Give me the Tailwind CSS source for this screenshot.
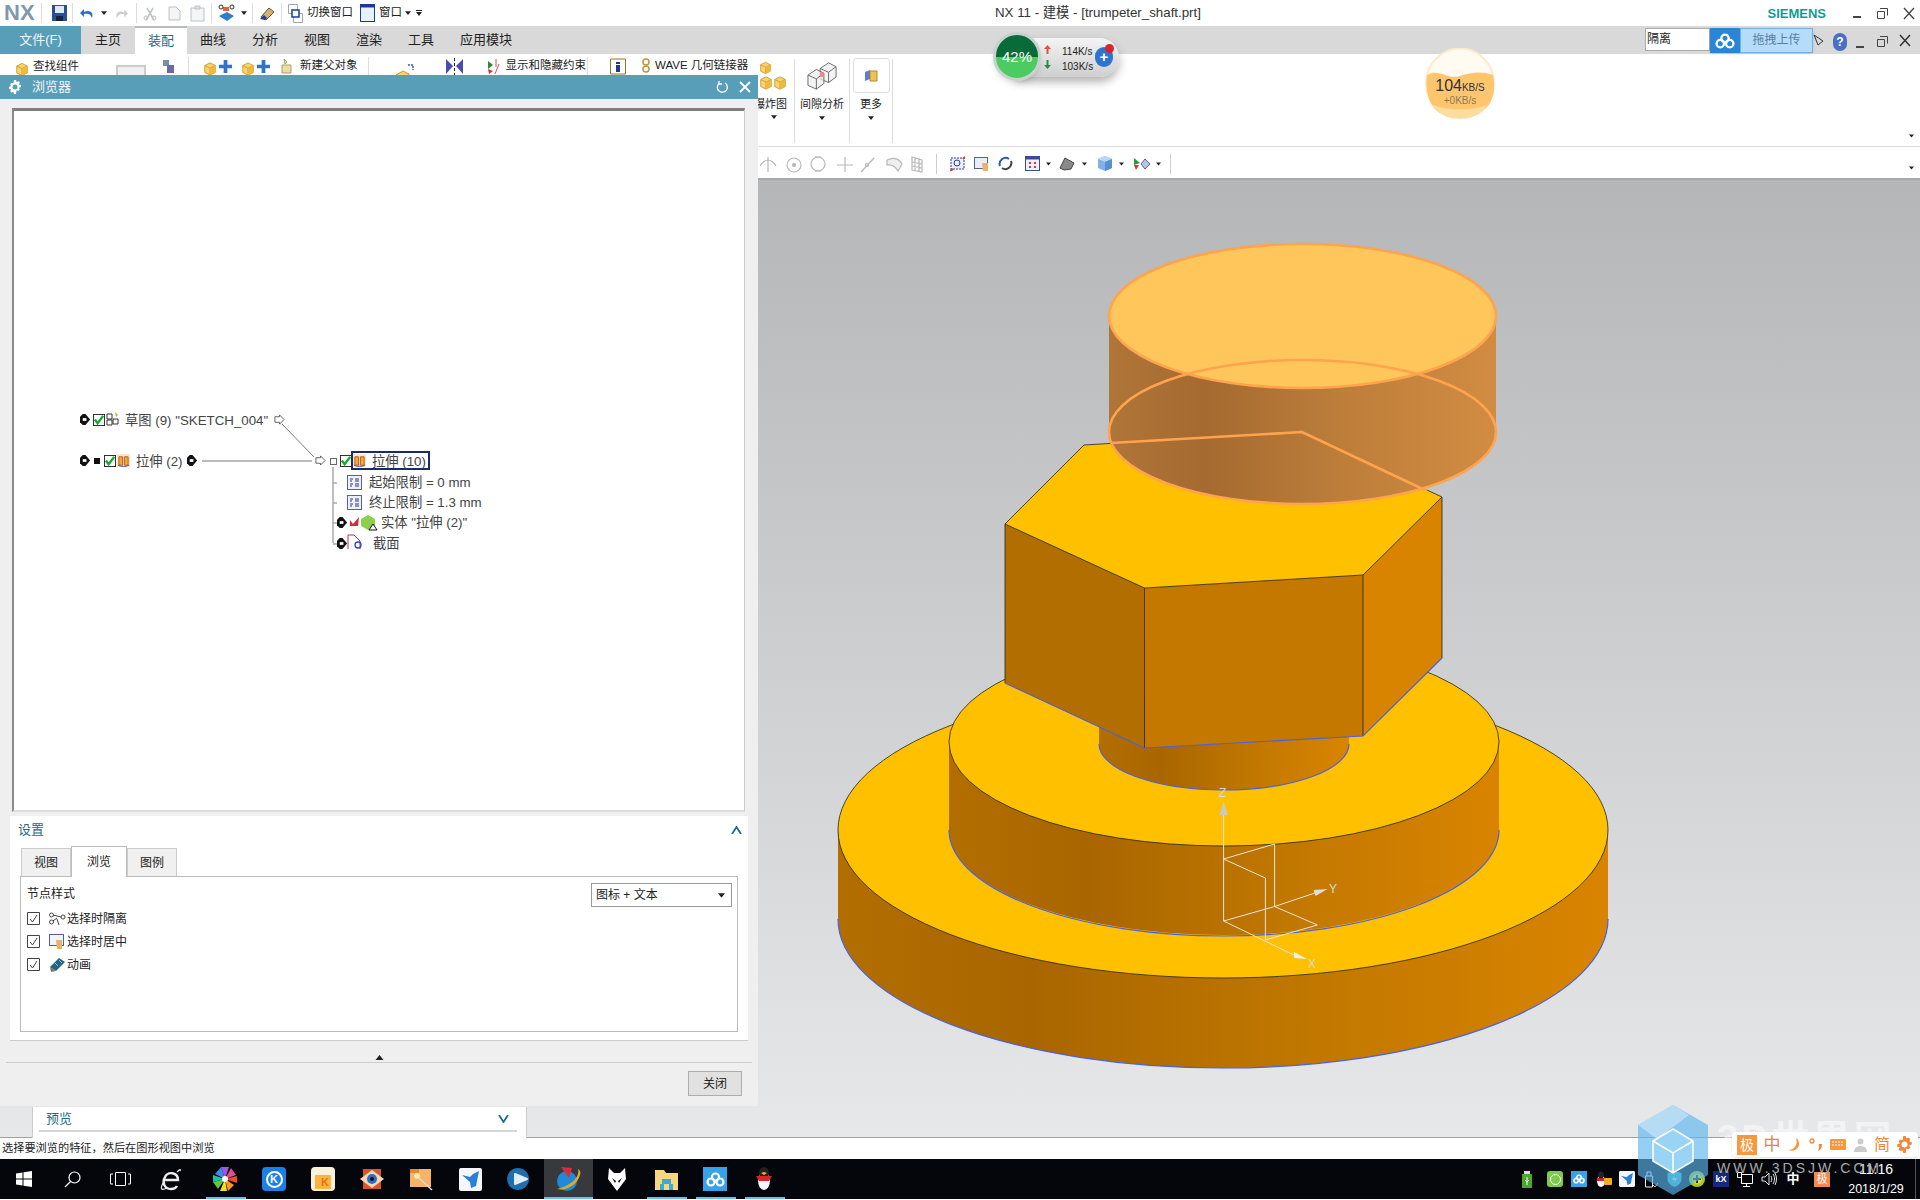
<!DOCTYPE html>
<html lang="zh">
<head>
    <meta charset="UTF-8">
    <title>NX 11 - 建模 - [trumpeter_shaft.prt]</title>
    <script src="https://cdn.jsdelivr.net/npm/@tailwindcss/browser@4"></script>
</head>
<body class="font-['Liberation_Sans','Noto_Sans_CJK_SC',sans-serif] text-[#222]">
<!-- shared icons -->
<svg class="hidden">
    <symbol id="cube" viewBox="0 0 16 16"><path d="M8 1l6 3v8l-6 3-6-3V4z" fill="#fbd468" stroke="#c9963a"/><path d="M2 4l6 3 6-3M8 7v8" fill="none" stroke="#c9963a"/><path d="M8 7l6-3v8l-6 3z" fill="#eeb93f"/></symbol>
    <symbol id="caret" viewBox="0 0 8 5"><path d="M0 0h8L4 5z" fill="#222"/></symbol>
    <symbol id="plus" viewBox="0 0 14 14"><path d="M5 0h4v5h5v4H9v5H5V9H0V5h5z" fill="#2f72d0"/></symbol>
    <symbol id="diamond" viewBox="0 0 12 12"><path d="M3 0h3l5 6-5 6H3L0 9V3z" fill="#111"/><path d="M3 4.500h4v3H3z" fill="#fff"/></symbol>
    <symbol id="check" viewBox="0 0 13 13"><rect x=".5" y=".5" width="12" height="12" fill="#fff" stroke="#222"/><path d="M2 6l3 4 6-8" fill="none" stroke="#19a832" stroke-width="2.6"/></symbol>
    <symbol id="arrow" viewBox="0 0 12 12"><path d="M1 3h5V1l5 5-5 5V9H1z" fill="#fff" stroke="#555"/></symbol>
    <symbol id="extrude" viewBox="0 0 14 14"><rect width="14" height="14" fill="#fbe6cc"/><path d="M2 3h4v9H2zM8 3h4v9H8z" fill="#f3a93c" stroke="#b55b1a"/><path d="M1 12c3 2 9 2 12 0" fill="none" stroke="#3a55b5"/></symbol>
    <symbol id="params" viewBox="0 0 15 15"><rect x=".5" y=".5" width="14" height="14" fill="#eef0fa" stroke="#5560a8"/><path d="M3 4h3M3 6h2M8 4h4M8 6h4M3 9h3M3 11h2M8 9h4M8 11h4" stroke="#2b3480"/></symbol>
</svg>

<div class="relative w-[1920px] h-[1200px] overflow-hidden bg-white">

    <!-- Title bar -->
    <header class="h-[26px] flex items-center bg-white whitespace-nowrap [&>*]:shrink-0">
        <span class="w-[41px] pl-[4px] text-[22px] leading-none font-bold text-[#7f98ab]">NX</span>
        <div class="w-px h-[20px] bg-[#ddd]"></div>
        <svg class="ml-[10px] w-[15px] h-[16px]" viewBox="0 0 15 16"><path d="M0 0h15v16H0z" fill="#2c4f8f"/><path d="M3 1h9v7H3z" fill="#dfe8f5"/><path d="M4 11h7v5H4z" fill="#10233f"/></svg>
        <div class="ml-[5px] w-px h-[20px] bg-[#ddd]"></div>
        <svg class="ml-[7px] w-[14px] h-[14px]" viewBox="0 0 14 14"><path d="M12 12c2-5-2-9-8-6V3L0 7l4 4V8c4-1 7 0 8 4z" fill="#2a6fc4"/></svg>
        <svg class="ml-[7px] w-[6px] h-[4px]"><use href="#caret"/></svg>
        <svg class="ml-[8px] w-[13px] h-[13px]" viewBox="0 0 14 14"><path d="M2 12C0 7 4 3 10 6V3l4 4-4 4V8c-4-1-7 0-8 4z" fill="#c9ced3"/></svg>
        <div class="ml-[8px] w-px h-[20px] bg-[#ddd]"></div>
        <svg class="ml-[6px] w-[14px] h-[15px]" viewBox="0 0 14 15"><path d="M3 14l7-12M11 14L4 2" stroke="#bcc1c6" stroke-width="1.5"/><circle cx="3" cy="12" r="2" fill="none" stroke="#bcc1c6"/><circle cx="11" cy="12" r="2" fill="none" stroke="#bcc1c6"/></svg>
        <svg class="ml-[11px] w-[13px] h-[15px]" viewBox="0 0 13 15"><path d="M1 1h7l4 4v9H1z" fill="#f4f5f6" stroke="#bcc1c6"/></svg>
        <svg class="ml-[9px] w-[15px] h-[17px]" viewBox="0 0 15 17"><path d="M1 3h13v13H1z" fill="#f4f5f6" stroke="#bcc1c6"/><path d="M5 1h5v3H5z" fill="#dde0e3" stroke="#bcc1c6"/></svg>
        <div class="ml-[6px] w-px h-[20px] bg-[#ddd]"></div>
        <svg class="ml-[6px] w-[17px] h-[19px]" viewBox="0 0 17 19"><path d="M1 12l8-4 7 4-7 5z" fill="#2a7fc8"/><path d="M5 3h6v4H5z" fill="#e8622c"/><circle cx="3" cy="3" r="2" fill="#fff" stroke="#333"/><circle cx="14" cy="3" r="2" fill="#fff" stroke="#333"/></svg>
        <svg class="ml-[6px] w-[6px] h-[4px]"><use href="#caret"/></svg>
        <div class="ml-[5px] w-px h-[20px] bg-[#ddd]"></div>
        <svg class="ml-[6px] w-[17px] h-[15px]" viewBox="0 0 17 15"><path d="M2 11l8-9 5 4-8 8z" fill="#d9b26a" stroke="#555"/><path d="M1 13l4-4 3 3-2 2z" fill="#2b3c8f"/></svg>
        <div class="ml-[5px] w-px h-[20px] bg-[#ddd]"></div>
        <svg class="ml-[6px] w-[15px] h-[19px]" viewBox="0 0 15 19"><path d="M.5.5h9v9h-9zM5.5 9.5h9v9h-9z" fill="#fff" stroke="#9aa"/><path d="M4 6h7v7H4z" fill="#fff" stroke="#1a3a9a" stroke-width="1.5"/></svg>
        <span class="ml-[4px] text-[11.5px] leading-none">切换窗口</span>
        <svg class="ml-[7px] w-[15px] h-[18px]" viewBox="0 0 15 18"><rect x=".5" y=".5" width="14" height="17" fill="#e9f1fb" stroke="#1a3a9a"/><path d="M.5.5h14v3H.5z" fill="#1a3a9a"/></svg>
        <span class="ml-[4px] text-[11.5px] leading-none">窗口</span>
        <svg class="ml-[3px] w-[6px] h-[4px]"><use href="#caret"/></svg>
        <svg class="ml-[5px] w-[6px] h-[6px]" viewBox="0 0 6 6"><path d="M0 0h6v1H0zM0 2h6L3 6z" fill="#222"/></svg>
        <span class="ml-[573px] text-[13.3px] leading-none text-[#333]">NX 11 - 建模 - [trumpeter_shaft.prt]</span>
        <span class="ml-auto mr-[27px] text-[13px] leading-none font-bold text-[#0f9d94]">SIEMENS</span>
        <span class="mr-[16px] mt-[8px] w-[8px] h-[2px] bg-[#444]"></span>
        <svg class="mr-[15px] w-[11px] h-[11px]" viewBox="0 0 11 11"><path d="M3 .5h7.500v7M.5 3.500h7v7h-7z" fill="none" stroke="#444"/></svg>
        <svg class="mr-[5px] w-[12px] h-[13px]" viewBox="0 0 12 13"><path d="M1 1l10 11M11 1L1 12" stroke="#444" stroke-width="1.3"/></svg>
    </header>

    <!-- Ribbon tabs -->
    <nav class="h-[28px] flex bg-[#d9d9d9] text-[13px] text-[#222]">
        <div class="w-[81px] flex items-center justify-center bg-[#589eb8] text-white/90">文件(F)</div>
        <div class="w-[54px] flex items-center justify-center">主页</div>
        <div class="w-[52px] flex items-center justify-center bg-white border-t-2 border-[#bbb] text-[#1f6b85]">装配</div>
        <div class="w-[52px] flex items-center justify-center">曲线</div>
        <div class="w-[52px] flex items-center justify-center">分析</div>
        <div class="w-[52px] flex items-center justify-center">视图</div>
        <div class="w-[52px] flex items-center justify-center">渲染</div>
        <div class="w-[52px] flex items-center justify-center">工具</div>
        <div class="w-[78px] flex items-center justify-center">应用模块</div>
    </nav>

    <!-- Ribbon -->
    <section class="h-[93px] flex bg-white text-[12px] border-b border-[#ddd]">
        <div class="w-[758px] h-[24px] shrink-0 flex items-center whitespace-nowrap text-[11.5px] [&>*]:shrink-0">
            <svg class="ml-[15px] w-[14px] h-[17px] mt-[6px]"><use href="#cube"/></svg>
            <span class="ml-[4px] mt-[1px]">查找组件</span>
            <div class="ml-[37px] mt-[13px] w-[30px] h-[16px] bg-[#f0f0f0] border-2 border-b-0 border-[#ccc]"></div>
            <svg class="ml-[16px] w-[12px] h-[14px]" viewBox="0 0 12 14"><path d="M1 1h6v6H1z" fill="#78909c"/><path d="M5 6h7v8H5z" fill="#6a6aa8"/></svg>
            <div class="ml-[14px] w-px h-[18px] bg-[#ddd]"></div>
            <svg class="ml-[14px] mt-[5px] w-[14px] h-[14px]"><use href="#cube"/></svg>
            <svg class="ml-[2px] w-[13px] h-[13px]"><use href="#plus"/></svg>
            <svg class="ml-[9px] mt-[5px] w-[14px] h-[14px]"><use href="#cube"/></svg>
            <svg class="ml-[2px] w-[13px] h-[13px]"><use href="#plus"/></svg>
            <svg class="ml-[10px] w-[14px] h-[16px]" viewBox="0 0 14 16"><path d="M4 1l3 3-2 2zM2 7h9v8H2z" fill="#e8e0a0" stroke="#a9a070"/></svg>
            <span class="ml-[6px]">新建父对象</span>
            <div class="ml-[10px] w-px h-[18px] bg-[#ddd]"></div>
            <svg class="ml-[27px] mt-[8px] w-[20px] h-[17px]" viewBox="0 0 20 17"><path d="M0 13l7-4 6 3v5H0z" fill="#fbd468" stroke="#c9963a"/><path d="M12 3h5v5" fill="none" stroke="#2f5fb0" stroke-width="1.5" stroke-dasharray="2 1"/></svg>
            <svg class="ml-[30px] w-[17px] h-[17px]" viewBox="0 0 17 17"><path d="M0 1l7 7-7 8zM17 1l-7 7 7 8z" fill="#4a4ab8"/><path d="M8.500 0v17" stroke="#222" stroke-dasharray="3 2"/></svg>
            <svg class="ml-[24px] w-[14px] h-[17px]" viewBox="0 0 14 17"><path d="M1 3l5 4-5 4z" fill="#2a8a3a"/><path d="M1 11l5 2-4 3z" fill="#d33"/><path d="M9 1v8M12 6l-4 10" stroke="#c55" fill="none"/></svg>
            <span class="ml-[5px]">显示和隐藏约束</span>
            <div class="ml-[1px] w-px h-[18px] bg-[#ddd]"></div>
            <svg class="ml-[22px] w-[16px] h-[18px]" viewBox="0 0 16 18"><path d="M.5 2h15v15H.5z" fill="#fff" stroke="#8a7a30"/><path d="M6 5h4v2H6zM6 8h4v7H6z" fill="#243a88"/></svg>
            <svg class="ml-[13px] w-[14px] h-[16px]" viewBox="0 0 14 16"><circle cx="7" cy="4" r="3" fill="none" stroke="#c0963a" stroke-width="1.5"/><circle cx="7" cy="11" r="3" fill="none" stroke="#c0963a" stroke-width="1.5"/></svg>
            <span class="ml-[2px]">WAVE 几何链接器</span>
        </div>
        <div class="w-[37px] shrink-0 pt-[2px] flex flex-col items-center border-r border-[#ddd] h-[84px] mt-[5px]">
            <svg class="w-[13px] h-[14px] self-start ml-[1px]"><use href="#cube"/></svg>
            <div class="flex self-start ml-[1px] mt-[1px]"><svg class="w-[14px] h-[14px]"><use href="#cube"/></svg><svg class="w-[14px] h-[14px]"><use href="#cube"/></svg></div>
            <span class="whitespace-nowrap mt-[6px] w-[32px] text-[11px] ml-[-12px]">爆炸图</span>
            <svg class="mt-[2px] w-[6px] h-[4px] ml-[-4px]"><use href="#caret"/></svg>
        </div>
        <div class="w-[55px] shrink-0 pt-[2px] flex flex-col items-center border-r border-[#ddd] h-[84px] mt-[5px]">
            <svg class="w-[30px] h-[30px]" viewBox="0 0 32 32"><path d="M14 8l9-6 8 4v11l-8 6-9-4z" fill="#f4f4f4" stroke="#666"/><path d="M14 8l9 4 8-6M23 12v11" fill="none" stroke="#666"/><path d="M1 15l9-6 8 4v11l-8 6-9-4z" fill="#eee" fill-opacity=".7" stroke="#666"/><path d="M1 15l9 4 8-6M10 19v11" fill="none" stroke="#666"/><path d="M14 12h4v5h-4z" fill="#e88"/></svg>
            <span class="whitespace-nowrap mt-[5px] text-[11px]">间隙分析</span>
            <svg class="mt-[3px] w-[6px] h-[4px]"><use href="#caret"/></svg>
        </div>
        <div class="w-[43px] shrink-0 flex flex-col items-center border-r border-[#ddd] h-[84px] mt-[5px]">
            <div class="mt-[-1px] w-[37px] h-[35px] border border-[#ddd] rounded-[3px] flex items-center justify-center">
                <svg class="w-[14px] h-[13px]" viewBox="0 0 14 13"><path d="M1 3l5-2v9l-5 2z" fill="#5a7fd0"/><path d="M6 2h7v10H6z" fill="#f0c050" stroke="#b58a30"/></svg>
            </div>
            <span class="mt-[3px] text-[11px]">更多</span>
            <svg class="mt-[3px] w-[6px] h-[4px]"><use href="#caret"/></svg>
        </div>
        <svg class="ml-auto mr-[6px] mt-[80px] w-[5px] h-[4px]"><use href="#caret"/></svg>
    </section>

    <!-- View toolbar -->
    <section class="h-[33px] pt-[2px] pl-[758px] flex items-center bg-white border-b-2 border-[#a9a9a9]">
        <svg class="ml-[2px] w-[170px] h-[20px]" viewBox="0 0 170 20" fill="none" stroke="#b8b8b8" stroke-width="1.200">
            <path d="M8 3v15M0 12c2-4 6-6 8-6s6 2 8 6"/>
            <circle cx="34" cy="11" r="7"/><circle cx="34" cy="11" r="1.500" fill="#b8b8b8"/>
            <circle cx="58" cy="10" r="7"/><path d="M55 3h6M55 17h6"/>
            <path d="M85 3v15M77 11h16"/>
            <path d="M101 18l13-14"/><circle cx="107" cy="11" r="1.500"/>
            <path d="M127 6c6-3 12-2 15 4l-4 7c-3-5-6-7-11-6z" fill="#eee"/>
            <path d="M152 3l10 3v12l-10-2zM155 4v13M159 5v13M152 8l10 2M152 12l10 2"/>
        </svg>
        <div class="ml-[6px] w-px h-[20px] bg-[#ccc]"></div>
        <svg class="ml-[13px] w-[15px] h-[15px]" viewBox="0 0 15 15"><rect x="1" y="2" width="13" height="11" fill="#eef" stroke="#2b3c8f" stroke-dasharray="2 1"/><circle cx="7" cy="7" r="3" fill="none" stroke="#2b3c8f"/><path d="M0 15l3-2M15 1l-2 2" stroke="#d33" stroke-width="2"/></svg>
        <svg class="ml-[9px] w-[16px] h-[14px]" viewBox="0 0 16 14"><rect x=".5" y=".5" width="13" height="11" fill="#e9edf8" stroke="#56608f"/><path d="M8 6h6v8H9z" fill="#e9b36a"/></svg>
        <svg class="ml-[8px] w-[15px] h-[15px]" viewBox="0 0 15 15" fill="none"><path d="M2 10A6 6 0 0 1 11 3" stroke="#2a5aa8" stroke-width="2"/><path d="M13 5a6 6 0 0 1-9 7" stroke="#444" stroke-width="2"/></svg>
        <svg class="ml-[12px] w-[15px] h-[15px]" viewBox="0 0 15 15"><rect x=".5" y=".5" width="14" height="14" fill="#f0f0fa" stroke="#3a4a9a"/><path d="M.5.5h14v3H.5z" fill="#3a4a9a"/><path d="M4 6h2v2H4zM9 6h2v2H9zM4 10h2v2H4zM9 10h2v2H9z" fill="#d33"/></svg>
        <svg class="ml-[6px] w-[5px] h-[4px]"><use href="#caret"/></svg>
        <svg class="ml-[8px] w-[16px] h-[14px]" viewBox="0 0 16 14"><path d="M1 11l5-10 9 5-3 6-7 1z" fill="#8a8a8a" stroke="#444"/></svg>
        <svg class="ml-[7px] w-[5px] h-[4px]"><use href="#caret"/></svg>
        <svg class="ml-[11px] w-[14px] h-[15px]" viewBox="0 0 14 15"><path d="M7 0l7 3v9l-7 3-7-3V3z" fill="#7fb0e8"/><path d="M0 3l7 3 7-3-7-3z" fill="#b9d6f5"/><path d="M7 6v9l7-3V3z" fill="#5a8fd0"/></svg>
        <svg class="ml-[7px] w-[5px] h-[4px]"><use href="#caret"/></svg>
        <svg class="ml-[10px] w-[16px] h-[14px]" viewBox="0 0 16 14"><path d="M0 1l6 5-6 2z" fill="#2a9a3a"/><path d="M0 8l5 0-3 5z" fill="#d33"/><path d="M7 7l4-5 5 5-5 5z" fill="#b8c4e4" stroke="#56608f"/></svg>
        <svg class="ml-[6px] w-[5px] h-[4px]"><use href="#caret"/></svg>
        <div class="ml-[9px] w-px h-[20px] bg-[#ccc]"></div>
        <svg class="ml-auto mr-[6px] mt-[8px] w-[5px] h-[4px]"><use href="#caret"/></svg>
    </section>

    <!-- Graphics viewport -->
    <main class="h-[957px] bg-linear-to-b from-[#b4b6b8] to-[#e6e8ea]">
        <svg class="w-[1920px] h-[957px]" viewBox="0 181 1920 957" font-family="Liberation Sans">
            <defs>
                <linearGradient id="metal">
                    <stop offset="0" stop-color="#b26e00"/>
                    <stop offset=".25" stop-color="#a96600"/>
                    <stop offset=".6" stop-color="#c07700"/>
                    <stop offset="1" stop-color="#d98400"/>
                </linearGradient>
                <linearGradient id="glass">
                    <stop offset="0" stop-color="#b07538"/>
                    <stop offset=".25" stop-color="#a56a30"/>
                    <stop offset=".6" stop-color="#bd7e3a"/>
                    <stop offset="1" stop-color="#d28c42"/>
                </linearGradient>
            </defs>
            <!-- base disk -->
            <path d="M838 831v89A385 149 0 0 0 1608 920V831z" fill="url(#metal)"/>
            <path d="M838 920A385 149 0 0 0 1608 920" fill="none" stroke="#4a62e0" stroke-width="1.200"/>
            <ellipse cx="1223" cy="831" rx="385" ry="148" fill="#ffc000" stroke="#222" stroke-width=".8"/>
            <!-- middle disk -->
            <path d="M949 743v88A275 105 0 0 0 1499 831V743z" fill="url(#metal)"/>
            <path d="M949 831A275 106 0 0 0 1499 831" fill="none" stroke="#4a62e0" stroke-width="1.200"/>
            <ellipse cx="1224" cy="743" rx="275" ry="104" fill="#ffc000" stroke="#222" stroke-width=".8"/>
            <!-- neck -->
            <path d="M1099 700v45A125 46 0 0 0 1349 745V700z" fill="url(#metal)"/>
            <path d="M1099 745A125 46 0 0 0 1349 745" fill="none" stroke="#4a62e0" stroke-width="1.200"/>
            <!-- hexagon -->
            <path d="M1005 525V684L1144.500 749V589z" fill="#b36e00"/>
            <path d="M1144.500 589V749L1363 737V576z" fill="#c57800"/>
            <path d="M1363 576V737L1442 659V498z" fill="#d98400"/>
            <path d="M1084 446L1005 525L1144.500 589L1363 576L1442 498L1302 433z" fill="#ffc000" stroke="#222" stroke-width=".8"/>
            <path d="M1005 525V684M1144.500 589V749M1363 576V737M1442 498V659" stroke="#222" stroke-width=".8"/>
            <path d="M1005 684L1144.500 749L1363 737L1442 659" fill="none" stroke="#4a62e0" stroke-width="1.200"/>
            <!-- transparent cylinder -->
            <path d="M1109 317V433A193.500 72 0 0 0 1496 433V317z" fill="url(#glass)"/>
            <ellipse cx="1302.500" cy="317" rx="193.500" ry="72" fill="#ffc75b"/>
            <g fill="none" stroke="#ffa34d" stroke-width="2.600">
                <ellipse cx="1302.500" cy="317" rx="193.500" ry="72"/>
                <ellipse cx="1302.500" cy="433" rx="193.500" ry="72"/>
                <path d="M1111 444L1302 433L1427 492"/>
            </g>
            <!-- datum csys -->
            <g fill="none" stroke="#e8e4d8" stroke-width="1">
                <path d="M1223.600 922V815M1223.600 860L1274.600 845V907.500M1223.600 860L1265.400 879V941L1317.400 926L1274.600 907.500L1223.600 922L1298 958M1274.600 907.500L1315 894"/>
            </g>
            <path d="M1223.600 802l-4 14h8z" fill="#c8c8c8"/>
            <path d="M1327.600 890l-14 1 2 6z" fill="#ddd"/>
            <path d="M1307 960l-13-7 0 6z" fill="#eee"/>
            <g fill="#d8d8d8" font-size="12">
                <text x="1219" y="798">Z</text>
                <text x="1329" y="894">Y</text>
                <text x="1308" y="969">X</text>
            </g>
        </svg>
    </main>

    <!-- Status bar -->
    <footer class="h-[22px] pl-[2px] flex items-center bg-white border-t border-[#a0a0a0] text-[11.2px] text-[#222]">选择要浏览的特征，然后在图形视图中浏览</footer>

    <!-- Taskbar -->
    <div class="h-[40px] flex bg-[#04060c] relative">
        <div class="w-[48px] flex items-center justify-center">
            <svg class="w-[16px] h-[16px]" viewBox="0 0 16 16"><path d="M0 2.500l6.500-1V7.500H0zM7.500 1.300L16 0v7.500H7.500zM0 8.500h6.500v6L0 13.500zM7.500 8.500H16V16l-8.500-1.300z" fill="#fff"/></svg>
        </div>
        <div class="w-[48px] flex items-center justify-center">
            <svg class="w-[17px] h-[17px]" viewBox="0 0 17 17" fill="none" stroke="#fff" stroke-width="1.200"><circle cx="10.500" cy="6.500" r="5.500"/><path d="M6.500 10.500L1 16"/></svg>
        </div>
        <div class="w-[48px] flex items-center justify-center">
            <svg class="w-[21px] h-[14px]" viewBox="0 0 21 14" fill="none" stroke="#fff"><path d="M5.500.5h10v13h-10zM3 2H.5v10H3M18 2h2.500v10H18"/></svg>
        </div>
        <div class="w-[52px] flex items-center justify-center">
            <svg class="w-[21px] h-[23px]" viewBox="0 0 21 23" fill="none" stroke="#eee" stroke-width="2.400"><path d="M4 12h14c0-8-10-9-13-3-3 5-1 12 6 12 3 0 5-1 6-3"/><path d="M17 4c3-3 4-3 3-1M3 15c-3 6-2 8 4 5" stroke-width="1.200"/></svg>
        </div>
        <div class="relative ml-[4.5px] w-[49px] flex items-center justify-center">
            <svg class="w-[24px] h-[24px]" viewBox="0 0 24 24"><path d="M12 12L8 0h8z" fill="#a056e0"/><path d="M12 12l6-11 5 7z" fill="#e0508c"/><path d="M12 12l12-3v7z" fill="#f04a30"/><path d="M12 12l9 6-6 6z" fill="#fa9a20"/><path d="M12 12l2 12H7z" fill="#f4e020"/><path d="M12 12L5 22l-5-7z" fill="#5cc83c"/><path d="M12 12L0 15V8z" fill="#1fbfa0"/><path d="M12 12L2 7l6-7z" fill="#3a8ae8"/><circle cx="12" cy="12" r="3" fill="#fff"/></svg>
            <span class="absolute bottom-0 left-[5px] w-[40px] h-[2px] bg-[#76b9ed]"></span>
        </div>
        <div class="w-[49px] flex items-center justify-center">
            <div class="w-[24px] h-[24px] rounded-[4px] bg-[#1b7fe8] flex items-center justify-center"><span class="w-[17px] h-[17px] rounded-full border-2 border-white text-white text-[11px] leading-[13px] font-bold text-center">K</span></div>
        </div>
        <div class="w-[49px] flex items-center justify-center">
            <div class="w-[24px] h-[24px] rounded-[4px] bg-[#fbf0dc] flex items-end justify-center"><span class="w-[16px] h-[14px] mb-[2px] bg-[#f9b53e] text-[#e8701a] text-[11px] leading-[14px] font-bold text-right pr-[2px]">K</span></div>
        </div>
        <div class="w-[49px] flex items-center justify-center">
            <svg class="w-[24px] h-[24px]" viewBox="0 0 24 24"><rect x="3" y="2" width="18" height="20" fill="#d8542c"/><path d="M0 12l12-9 12 9-12 9z" fill="#f4d8b4"/><circle cx="12" cy="12" r="5" fill="#2a6fc4"/><circle cx="12" cy="12" r="2" fill="#111"/></svg>
        </div>
        <div class="w-[49px] flex items-center justify-center">
            <svg class="w-[24px] h-[24px]" viewBox="0 0 24 24"><rect x="1" y="2" width="21" height="18" fill="#f4b46a"/><path d="M1 2h9v4H1z" fill="#e08a3a"/><path d="M10 11l13 12" stroke="#ddd" stroke-width="1.500"/><circle cx="8" cy="9" r="3" fill="#f8e8a0"/></svg>
        </div>
        <div class="w-[49px] flex items-center justify-center">
            <svg class="w-[23px] h-[23px]" viewBox="0 0 23 23"><rect width="23" height="23" rx="2" fill="#f4f6fb"/><path d="M20 3l-3 15-5 2-1-6-8-7 8 2 3-3z" fill="#2a7fd8"/></svg>
        </div>
        <div class="w-[49px] flex items-center justify-center">
            <svg class="w-[24px] h-[24px]" viewBox="0 0 24 24"><circle cx="11" cy="12" r="11" fill="#1f6fb0"/><path d="M8 7l12 5-12 5z" fill="#dfeefa" stroke="#dfeefa" stroke-width="2" stroke-linejoin="round"/></svg>
        </div>
        <div class="relative w-[49px] flex items-center justify-center bg-[#38393c]">
            <svg class="w-[26px] h-[28px]" viewBox="0 0 26 28"><circle cx="12" cy="16" r="10" fill="#1f8ad8"/><path d="M6 2l11 1-3 10z" fill="#e02a3c"/><path d="M2 24c8 2 20-3 23-14 1-3 0-5-2-6 2 6-4 16-21 20z" fill="#e0a830"/></svg>
            <span class="absolute bottom-0 left-0 w-full h-[2px] bg-[#76b9ed]"></span>
        </div>
        <div class="w-[49px] flex items-center justify-center">
            <svg class="w-[18px] h-[23px]" viewBox="0 0 18 23"><path d="M1 0l5 5h6l5-5 1 11-9 12L0 11z" fill="#fff"/><path d="M4 10l4 3-1 2zM14 10l-4 3 1 2z" fill="#111"/></svg>
        </div>
        <div class="relative w-[49px] flex items-center justify-center">
            <svg class="w-[23px] h-[21px]" viewBox="0 0 23 21"><path d="M0 1h9l2 3h12v17H0z" fill="#f5d77e"/><path d="M7 10h9v5H7zM5 15h4v6H5zM14 15h4v6h-4z" fill="#3fa8d8"/></svg>
            <span class="absolute bottom-0 left-[5px] w-[40px] h-[2px] bg-[#76b9ed]"></span>
        </div>
        <div class="relative w-[49px] flex items-center justify-center">
            <div class="w-[24px] h-[24px] bg-[#36a3e8] flex items-center justify-center"><svg class="w-[19px] h-[15px]" viewBox="0 0 19 15" fill="none" stroke="#fff" stroke-width="2.200"><circle cx="9.500" cy="5" r="3.500"/><circle cx="5" cy="10" r="3.500"/><circle cx="14" cy="10" r="3.500"/></svg></div>
            <span class="absolute bottom-0 left-[5px] w-[40px] h-[2px] bg-[#76b9ed]"></span>
        </div>
        <div class="relative w-[49px] flex items-center justify-center">
            <svg class="w-[18px] h-[24px]" viewBox="0 0 18 24"><ellipse cx="9" cy="14" rx="6" ry="9" fill="#f5f5f5"/><ellipse cx="9" cy="6" rx="5" ry="6" fill="#222"/><path d="M1 9h16l-3 5H4z" fill="#d8242c"/><path d="M6 6l3-1 3 1-3 2z" fill="#f0b020"/></svg>
            <span class="absolute bottom-0 left-[5px] w-[40px] h-[2px] bg-[#76b9ed]"></span>
        </div>

        <!-- Tray -->
        <div class="ml-[722.5px] flex items-center h-[40px] text-white">
            <div class="w-[32px] flex justify-center"><svg class="w-[12px] h-[17px]" viewBox="0 0 12 17"><path d="M1 3h10v14H1z" fill="#4aa82c"/><path d="M3 0h6v3H3z" fill="#ddd"/><path d="M6 6v8M4 9l2 2 2-2" stroke="#fff" fill="none"/></svg></div>
            <div class="w-[24px] flex justify-center"><div class="w-[16px] h-[16px] rounded-[3px] bg-[#7ccb4a] border-2 border-[#7ccb4a] flex items-center justify-center"><span class="w-[11px] h-[11px] rounded-full border border-white"></span></div></div>
            <div class="w-[24px] flex justify-center"><div class="w-[16px] h-[16px] bg-[#36a3e8] flex items-center justify-center"><svg class="w-[12px] h-[10px]" viewBox="0 0 19 15" fill="none" stroke="#fff" stroke-width="2.600"><circle cx="9.500" cy="5" r="3.500"/><circle cx="5" cy="10" r="3.500"/><circle cx="14" cy="10" r="3.500"/></svg></div></div>
            <div class="w-[24px] flex justify-center"><svg class="w-[17px] h-[17px]" viewBox="0 0 17 17"><ellipse cx="6" cy="10" rx="4" ry="6" fill="#f5f5f5"/><path d="M2 7h8v3H2z" fill="#d8242c"/><ellipse cx="6" cy="4" rx="3" ry="3.500" fill="#222"/><rect x="9" y="7" width="8" height="7" rx="1" fill="#f0b020"/></svg></div>
            <div class="w-[24px] flex justify-center"><svg class="w-[16px] h-[16px]" viewBox="0 0 23 23"><rect width="23" height="23" rx="2" fill="#f4f6fb"/><path d="M20 3l-3 15-5 2-1-6-8-7 8 2 3-3z" fill="#2a7fd8"/></svg></div>
            <div class="w-[24px] flex justify-center"><svg class="w-[14px] h-[17px]" viewBox="0 0 14 17" fill="none" stroke="#eee"><path d="M1.500 5h7v11h-7zM3 5V1h4v4"/><path d="M9 14l2 2 3-4" stroke-width=".8"/></svg></div>
            <div class="w-[22px] flex justify-center"><svg class="w-[15px] h-[16px]" viewBox="0 0 15 16"><path d="M7.500 0l7 2v6c0 4-4 7-7 8-3-1-7-4-7-8V2z" fill="#3aa8b8"/><path d="M8 3L5 9h3l-1 4 3-6H7z" fill="#b8f0e0"/></svg></div>
            <div class="w-[24px] flex justify-center"><svg class="w-[16px] h-[16px]" viewBox="0 0 16 16"><circle cx="8" cy="8" r="8" fill="#a8c820"/><circle cx="8" cy="8" r="5" fill="#f0e020"/><path d="M7 4h2v3h3v2H9v3H7V9H4V7h3z" fill="#222"/></svg></div>
            <div class="w-[24px] flex justify-center"><div class="w-[16px] h-[16px] bg-[#16287a] text-[9px] leading-[16px] font-bold text-center">kX</div></div>
            <div class="w-[24px] flex justify-center"><svg class="w-[16px] h-[15px]" viewBox="0 0 16 15" fill="none" stroke="#fff"><path d="M.500.500h4v5h-4zM4.500 2.500h11v9h-11zM9.500 11.500v3M6 14.500h7"/></svg></div>
            <div class="w-[24px] flex justify-center"><svg class="w-[16px] h-[14px]" viewBox="0 0 16 14" fill="none" stroke="#fff"><path d="M1 5h3l4-4v12L4 9H1zM10 4c1 2 1 4 0 6M12 2c2 3 2 7 0 10M14 1c2 4 2 8 0 12" stroke-width=".9"/></svg></div>
            <div class="w-[24px] text-center text-[13px] font-bold">中</div>
            <div class="ml-[9px] w-[16px] h-[15px] bg-[#f08a50] text-[11px] leading-[15px] text-center text-white">极</div>
        </div>
        <div class="absolute right-[14px] top-0 h-[40px] w-[60px] flex flex-col items-center justify-center leading-[20px] text-white whitespace-nowrap">
            <span class="text-[14px]">11:16</span><span class="text-[12.5px]">2018/1/29</span>
        </div>
        <div class="absolute right-[4px] top-0 w-px h-[40px] bg-[#555]"></div>
    </div>

    <!-- Part navigator panel -->
    <aside class="absolute left-0 top-[75px] w-[758px] h-[1031px] flex flex-col bg-[#efefef]">
        <div class="h-[24px] shrink-0 flex items-center bg-[#589eb8] text-white text-[13px]">
            <svg class="ml-[8px] w-[14px] h-[14px]" viewBox="0 0 14 14"><path d="M6 0h2l.5 2 2-.8 1.300 1.400-.9 1.900 2.100.6v2l-2.100.6.900 1.900-1.300 1.400-2-.8L8 14H6l-.5-2.200-2 .8L2.200 11.200l.9-1.900L1 8.700v-2l2.100-.6-.9-1.900L3.500 2.800l2 .8z" fill="#fff"/><circle cx="7" cy="7" r="2.500" fill="#589eb8"/></svg>
            <span class="ml-[10px] text-white/90">浏览器</span>
            <svg class="ml-auto w-[13px] h-[13px]" viewBox="0 0 13 13" fill="none" stroke="#fff" stroke-width="1.300"><path d="M9 2A5 5 0 1 1 3 2.500M3 0v3h3"/></svg>
            <svg class="ml-[10px] mr-[7px] w-[12px] h-[12px]" viewBox="0 0 12 12"><path d="M1 1l10 10M11 1L1 11" stroke="#fff" stroke-width="1.800"/></svg>
        </div>

        <!-- Node canvas (y offsets in here follow the graph, a free canvas) -->
        <div class="relative shrink-0 ml-[12px] mt-[9px] w-[733px] h-[704px] bg-white border-t-[3px] border-l-2 border-r border-b-2 border-t-[#7f7f7f] border-l-[#8a8a8a] border-r-[#ccc] border-b-[#ddd] text-[13.3px] text-[#444]">
            <svg class="absolute left-[-14px] top-[-111px] w-[600px] h-[600px]" viewBox="0 0 600 600">
                <path d="M282 424L314 457M202 461H312" stroke="#777" fill="none"/>
                <path d="M333 467V543M333 483h4M333 503h4M333 523h6M333 544h6" stroke="#aaa" stroke-width="1.500" fill="none"/>
                <rect x="330.500" y="458.500" width="6" height="6" fill="#fff" stroke="#666"/>
                <rect x="94" y="458" width="6" height="6" fill="#111"/>
                <use href="#diamond" x="80" y="414" width="11" height="11"/>
                <use href="#check" x="93" y="414" width="12" height="12"/>
                <path d="M107 414h5v5h-5zM113 419h5v5h-5zM107 420h5v5h-5z" fill="none" stroke="#333"/>
                <path d="M115 412l3 3-2 2z" fill="#e0a030"/>
                <use href="#arrow" x="274" y="414" width="11" height="11"/>
                <use href="#diamond" x="80" y="455" width="11" height="11"/>
                <use href="#check" x="104" y="455" width="12" height="12"/>
                <use href="#extrude" x="117" y="454" width="13" height="13"/>
                <use href="#diamond" x="187" y="455" width="11" height="11"/>
                <use href="#arrow" x="315" y="455" width="11" height="11"/>
                <use href="#check" x="340" y="455" width="12" height="12"/>
                <use href="#extrude" x="353" y="454" width="13" height="13"/>
                <use href="#params" x="347" y="475" width="15" height="15"/>
                <use href="#params" x="347" y="495" width="15" height="15"/>
                <use href="#diamond" x="337" y="517" width="11" height="11"/>
                <path d="M350 520l3 4 6-7-1 9h-8z" fill="#d82a3a"/>
                <path d="M368 515l7 4v7l-7 4-7-4v-7z" fill="#8ad04a"/>
                <path d="M369 530l4-6 4 6z" fill="#fff" stroke="#111"/>
                <use href="#diamond" x="337" y="538" width="11" height="11"/>
                <path d="M348 549V535h6l6 6v8" fill="none" stroke="#c82a4a"/>
                <circle cx="358" cy="545" r="3" fill="none" stroke="#2a4ab8" stroke-width="1.300"/>
            </svg>
            <div class="absolute left-[111px] top-[300px] whitespace-nowrap">草图 (9) "SKETCH_004"</div>
            <div class="absolute left-[122px] top-[341px] whitespace-nowrap">拉伸 (2)</div>
            <div class="absolute left-[337px] top-[340px] w-[79px] h-[19px] border-2 border-[#1a2a6c]"></div>
            <div class="absolute left-[358px] top-[341px] whitespace-nowrap">拉伸 (10)</div>
            <div class="absolute left-[355px] top-[362px] whitespace-nowrap">起始限制 = 0 mm</div>
            <div class="absolute left-[355px] top-[382px] whitespace-nowrap">终止限制 = 1.3 mm</div>
            <div class="absolute left-[367px] top-[402px] whitespace-nowrap">实体 "拉伸 (2)"</div>
            <div class="absolute left-[359px] top-[423px] whitespace-nowrap">截面</div>
        </div>

        <!-- Settings -->
        <section class="mt-[4px] ml-[10px] w-[738px] h-[225px] shrink-0 bg-white border-b border-[#ccc] text-[12px]">
            <div class="h-[28px] flex items-center justify-between pl-[8px] pr-[6px]">
                <span class="text-[13px] text-[#1f6b85]">设置</span>
                <svg class="w-[11px] h-[8px]" viewBox="0 0 11 8" fill="none" stroke="#1f6b85" stroke-width="1.800"><path d="M1 8l4.500-7L10 8"/></svg>
            </div>
            <div class="h-[32px] pl-[11px] flex items-end relative z-10">
                <div class="w-[50px] h-[28px] flex items-center justify-center bg-[#f0f0f0] border border-b-0 border-[#ccc]">视图</div>
                <div class="w-[56px] h-[31px] mb-[-1px] flex items-center justify-center bg-white border border-b-0 border-[#bbb]">浏览</div>
                <div class="w-[50px] h-[28px] flex items-center justify-center bg-[#f0f0f0] border border-b-0 border-[#ccc]">图例</div>
            </div>
            <div class="ml-[10px] w-[718px] h-[156px] border border-[#bbb] px-[6px]">
                <div class="h-[33px] flex items-center justify-between">
                    <span>节点样式</span>
                    <div class="mt-[3px] mr-[-1px] w-[141px] h-[24px] flex items-center justify-between px-[4px] border border-[#999]">
                        <span>图标 + 文本</span>
                        <svg class="mr-[2px] w-[7px] h-[5px]"><use href="#caret"/></svg>
                    </div>
                </div>
                <div class="mt-[-3px] h-[23px] flex items-center">
                    <svg class="w-[13px] h-[13px]" viewBox="0 0 13 13" fill="none" stroke="#444"><path d="M.5.5h12v12H.5z"/><path d="M3 7l2.500 3L10 3"/></svg>
                    <svg class="ml-[9px] w-[17px] h-[14px]" viewBox="0 0 17 14" fill="none" stroke="#444"><circle cx="2.500" cy="3" r="2"/><circle cx="2.500" cy="10" r="2"/><circle cx="14" cy="5" r="2"/><path d="M4 3l8 2M4 9l4-3M8 7l2 6"/></svg>
                    <span class="ml-[1px]">选择时隔离</span>
                </div>
                <div class="h-[23px] flex items-center">
                    <svg class="w-[13px] h-[13px]" viewBox="0 0 13 13" fill="none" stroke="#444"><path d="M.5.5h12v12H.5z"/><path d="M3 7l2.500 3L10 3"/></svg>
                    <svg class="ml-[9px] w-[17px] h-[15px]" viewBox="0 0 17 15"><rect x=".5" y=".5" width="14" height="11" fill="#f2f4fb" stroke="#56608f"/><path d="M7 6h6v9H8z" fill="#e9b36a"/></svg>
                    <span class="ml-[1px]">选择时居中</span>
                </div>
                <div class="h-[23px] flex items-center">
                    <svg class="w-[13px] h-[13px]" viewBox="0 0 13 13" fill="none" stroke="#444"><path d="M.5.5h12v12H.5z"/><path d="M3 7l2.500 3L10 3"/></svg>
                    <svg class="ml-[9px] w-[17px] h-[15px]" viewBox="0 0 17 15"><path d="M1 10l9-9 6 4-9 9z" fill="#24667e"/><path d="M6 6l3 3M10 3l3 3" stroke="#7fc8dc"/><path d="M1 10l6 4-5 1z" fill="#777"/></svg>
                    <span class="ml-[1px]">动画</span>
                </div>
            </div>
        </section>

        <div class="h-[21px] shrink-0 flex items-end justify-center pb-[2px]">
            <svg class="w-[9px] h-[5px] rotate-180"><use href="#caret"/></svg>
        </div>
        <div class="ml-[6px] w-[746px] h-px shrink-0 bg-[#ccc]"></div>
        <div class="mt-[8px] mr-[16px] self-end w-[54px] h-[25px] flex items-center justify-center bg-[#e1e1e1] border border-[#adadad] text-[12px]">关闭</div>
    </aside>

    <!-- Preview strip under the panel -->
    <div class="absolute left-[32px] top-[1107px] w-[495px] h-[31px] bg-white border-x border-[#ccc] pl-[6px] pr-[9px]">
        <div class="h-[25px] flex items-center justify-between border-b-2 border-[#d5d5d5] pl-[7px] pr-[8px] text-[13px] text-[#1f6b85]">
            <span>预览</span>
            <svg class="w-[11px] h-[8px]" viewBox="0 0 11 8" fill="none" stroke="#1f6b85" stroke-width="1.800"><path d="M1 0l4.500 7L10 0"/></svg>
        </div>
    </div>

    <!-- Top-right search + upload widget -->
    <div class="absolute left-[1645px] top-[28px] w-[65px] h-[23px] bg-white border border-[#aaa] text-[12px] leading-[21px] pl-[1px]">隔离</div>
    <div class="absolute left-[1710px] top-[28px] w-[103px] h-[25px] flex rounded-[2px] shadow-sm">
        <div class="w-[30px] bg-[#2a84d8] flex items-center justify-center">
            <svg class="w-[20px] h-[16px]" viewBox="0 0 19 15" fill="none" stroke="#fff" stroke-width="2.200"><circle cx="9.500" cy="5" r="3.500"/><circle cx="5" cy="10" r="3.500"/><circle cx="14" cy="10" r="3.500"/></svg>
        </div>
        <div class="flex-1 bg-[#b5dcfa] border border-[#6bb3ea] text-[12px] text-[#5a7f9e] leading-[23px] text-center">拖拽上传</div>
    </div>
    <svg class="absolute left-[1813px] top-[34px] w-[11px] h-[12px]" viewBox="0 0 11 12" fill="none" stroke="#333"><path d="M1 1l9 6-5 4z"/></svg>
    <div class="absolute left-[1833px] top-[33px] w-[14px] h-[18px] rounded-full bg-[#4a6fc4] text-white text-[12px] leading-[18px] font-bold text-center">?</div>
    <span class="absolute left-[1856px] top-[46px] w-[8px] h-[2px] bg-[#444]"></span>
    <svg class="absolute left-[1877px] top-[36px] w-[11px] h-[11px]" viewBox="0 0 11 11"><path d="M3 .5h7.500v7M.5 3.500h7v7h-7z" fill="none" stroke="#444"/></svg>
    <svg class="absolute left-[1899px] top-[34px] w-[12px] h-[13px]" viewBox="0 0 12 13"><path d="M1 1l10 11M11 1L1 12" stroke="#333" stroke-width="1.500"/></svg>

    <!-- Network speed floater -->
    <div class="absolute left-[1017px] top-[38px] w-[102px] h-[39px] rounded-r-full bg-linear-to-b from-[#f4f4f4] to-[#cfcfcf] shadow-[0_5px_10px_rgba(0,0,0,0.3)] text-[10px] text-[#222]">
        <svg class="absolute left-[27px] top-[7px] w-[7px] h-[9px]" viewBox="0 0 7 9"><path d="M3.500 0L7 4H4.500v5h-2V4H0z" fill="#d8563c"/></svg>
        <svg class="absolute left-[27px] top-[22px] w-[7px] h-[9px]" viewBox="0 0 7 9"><path d="M3.500 9L7 5H4.500V0h-2v5H0z" fill="#2a8a4a"/></svg>
        <span class="absolute left-[45px] top-[6px]">114K/s</span>
        <span class="absolute left-[45px] top-[21px]">103K/s</span>
        <div class="absolute left-[78px] top-[9px] w-[18px] h-[20px] rounded-full bg-[#2f74d0] text-white text-[15px] leading-[20px] font-bold text-center">+</div>
        <div class="absolute left-[88px] top-[6px] w-[9px] h-[9px] rounded-full bg-[#d8242c]"></div>
    </div>
    <div class="absolute left-[993px] top-[32px] w-[48px] h-[49px] rounded-full border-[3px] border-[#c8d2cc] bg-[linear-gradient(#0a6b3a_52%,#4ccb63_52%)] text-white text-[15px] leading-[44px] text-center shadow-md">42%</div>

    <!-- Download speed ball -->
    <div class="absolute left-[1425px] top-[48px] w-[70px] h-[71px]">
        <svg class="w-[70px] h-[71px]" viewBox="0 0 70 71"><ellipse cx="35" cy="35.500" rx="34" ry="35" fill="#fffbf1" stroke="#fdeccb" stroke-width="2"/><path d="M2 27c12-7 20 5 33 1 12-4 22-5 33-1 3 15 0 28-9 35-14 11-35 11-48 0C3 54 0 40 2 27z" fill="#fdc66d"/><path d="M11 62c13 11 34 11 48 0l3-5C46 63 24 63 8 57z" fill="#fddca0"/></svg>
        <div class="absolute inset-x-0 top-[30px] text-center text-[#333] leading-none whitespace-nowrap"><span class="text-[16px]">104</span><span class="text-[10px]">KB/S</span></div>
        <div class="absolute inset-x-0 top-[48px] text-center text-[10px] text-[#8a7a5a] leading-none">+0KB/s</div>
    </div>

    <!-- Site watermark -->
    <svg class="absolute left-[1637px] top-[1105px] w-[72px] h-[90px]" viewBox="0 0 72 90">
        <path d="M36 0l35 20v50L36 90 1 70V20z" fill="#5cb5ee" fill-opacity=".65"/>
        <path d="M1 20L36 0l16 10-32 24z" fill="#c8e6f8" fill-opacity=".7"/>
        <path d="M36 24l20 12v20L36 68 16 56V36z" fill="#9ad4f5" stroke="#fff" stroke-width="1.500"/>
        <path d="M16 36l20 12 20-12M36 48v20" fill="none" stroke="#fff" stroke-width="1.500"/>
    </svg>
    <div class="absolute left-[1717px] top-[1117px] text-[38px] leading-[44px] font-bold text-white/50 tracking-[3px] whitespace-nowrap">3D世界网</div>
    <div class="absolute left-[1717px] top-[1160px] text-[14px] leading-[16px] text-[#a8a8a8] tracking-[3px] whitespace-nowrap">WWW.3DSJW.COM</div>

    <!-- IME toolbar -->
    <div class="absolute left-[1732px] top-[1132px] w-[186px] h-[25px] flex items-center rounded-[4px] bg-white shadow-sm text-[#f0873a]">
        <div class="ml-[5px] w-[20px] h-[20px] bg-[#f5983f] text-white text-[14px] leading-[20px] text-center">极</div>
        <div class="ml-[4px] w-[22px] text-center text-[17px] leading-none text-[#e8804a]">中</div>
        <svg class="w-[22px] h-[15px]" viewBox="0 0 22 15"><path d="M13 1c2 6-1 12-8 12 6 2 11-1 11-6 0-3-1-5-3-6z" fill="#f5983f"/></svg>
        <svg class="w-[22px] h-[15px]" viewBox="0 0 22 15"><circle cx="7" cy="4" r="2" fill="none" stroke="#f0873a" stroke-width="1.300"/><path d="M14 7h3c0 3-1 6-4 7 1-2 1-4 1-7z" fill="#f0873a"/></svg>
        <svg class="w-[23px] h-[13px]" viewBox="0 0 23 13"><rect x="3" y="1" width="16" height="11" rx="1" fill="#f5983f"/><path d="M5 4h12M5 7h12" stroke="#fff" stroke-dasharray="2 1"/></svg>
        <svg class="w-[21px] h-[14px]" viewBox="0 0 21 14"><circle cx="10.500" cy="3.500" r="3" fill="#ccc"/><path d="M4 14c0-4 3-6 6.500-6s6.500 2 6.500 6z" fill="#ccc"/></svg>
        <div class="w-[22px] text-center text-[16px] leading-none">简</div>
        <svg class="ml-[3px] w-[17px] h-[17px]" viewBox="0 0 14 14"><path d="M6 0h2l.5 2 2-.8 1.300 1.400-.9 1.900 2.100.6v2l-2.100.6.900 1.900-1.300 1.400-2-.8L8 14H6l-.5-2.200-2 .8L2.200 11.200l.9-1.900L1 8.700v-2l2.100-.6-.9-1.900L3.500 2.800l2 .8z" fill="#f0873a"/><circle cx="7" cy="7" r="2.500" fill="#fff"/></svg>
    </div>
</div>
</body>
</html>
